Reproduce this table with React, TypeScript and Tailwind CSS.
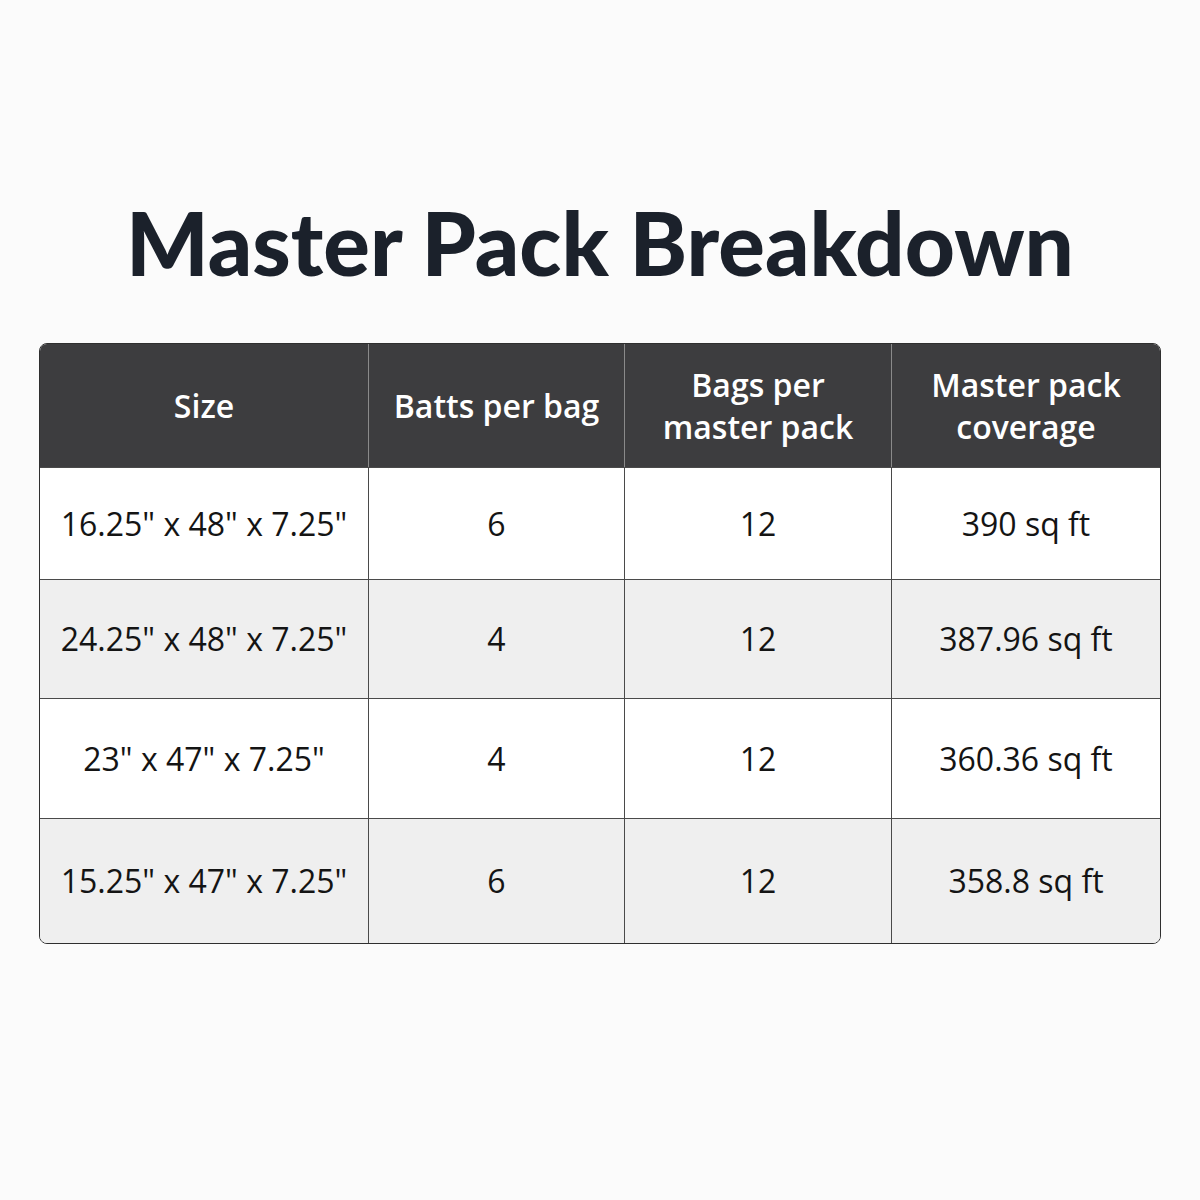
import React from "react";

// Master pack breakdown table: one row per batt size.
const rows = [
  { size: '16.25" x 48" x 7.25"', batts: "6", bags: "12", coverage: "390 sq ft" },
  { size: '24.25" x 48" x 7.25"', batts: "4", bags: "12", coverage: "387.96 sq ft" },
  { size: '23" x 47" x 7.25"', batts: "4", bags: "12", coverage: "360.36 sq ft" },
  { size: '15.25" x 47" x 7.25"', batts: "6", bags: "12", coverage: "358.8 sq ft" },
];

const rowHeights = ["h-[112px]", "h-[119px]", "h-[120px]", "h-[125px]"];

export default function App() {
  return (
    <div className="w-[1200px] h-[1200px] bg-[#fbfbfb] flex flex-col items-center">
      <h1
        className="mt-[199px] text-[87px] leading-none font-black text-[#1b212b]"
        style={{ fontFamily: "Lato, 'Liberation Sans', sans-serif" }}
      >
        Master Pack Breakdown
      </h1>

      <div
        className="mt-[57px] w-[1122px] rounded-[8px] border border-[#2f2f2f] overflow-hidden text-[#141414]"
        style={{ fontFamily: "'Open Sans', 'Noto Sans', sans-serif" }}
      >
        <div className="grid grid-cols-[329px_256px_267px_1fr] h-[123px] bg-[#3d3d3f] text-white font-semibold text-[32px] leading-[42px] text-center">
          <div className="flex items-center justify-center border-r border-[#8a8a8a]">Size</div>
          <div className="flex items-center justify-center border-r border-[#8a8a8a]">Batts per bag</div>
          <div className="flex items-center justify-center border-r border-[#8a8a8a]">
            Bags per
            <br />
            master pack
          </div>
          <div className="flex items-center justify-center">
            Master pack
            <br />
            coverage
          </div>
        </div>
        {rows.map((r, i) => (
          <div
            key={r.size}
            className={`grid grid-cols-[329px_256px_267px_1fr] ${rowHeights[i]} border-t border-[#4a4a4a] text-[32px] text-center ${
              i % 2 === 1 || i === 3 ? "bg-[#efefef]" : "bg-white"
            }`}
          >
            <div className="flex items-center justify-center border-r border-[#4a4a4a]">{r.size}</div>
            <div className="flex items-center justify-center border-r border-[#4a4a4a]">{r.batts}</div>
            <div className="flex items-center justify-center border-r border-[#4a4a4a]">{r.bags}</div>
            <div className="flex items-center justify-center">{r.coverage}</div>
          </div>
        ))}
      </div>
    </div>
  );
}
